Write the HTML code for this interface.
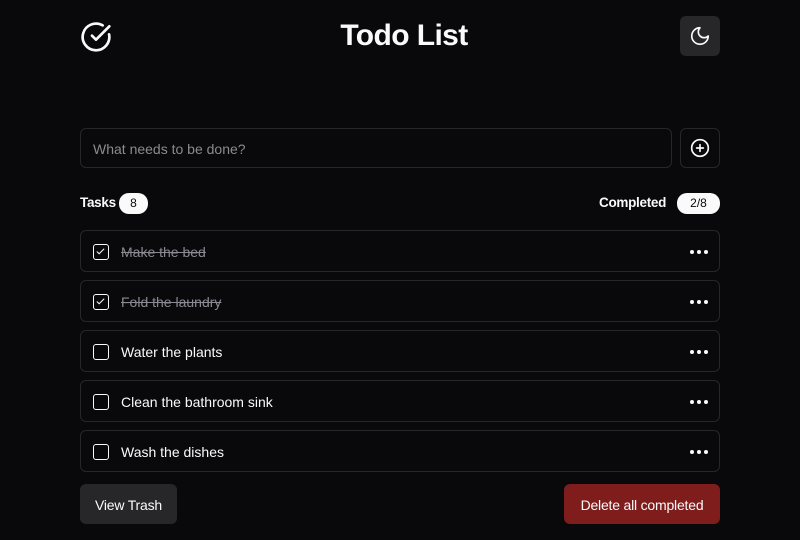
<!DOCTYPE html>
<html><head><style>
*{margin:0;padding:0;box-sizing:border-box}
body{width:800px;height:540px;background:#09090b;color:#fafafa;font-family:"Liberation Sans",sans-serif;position:relative;overflow:hidden}
.a{position:absolute}
.title{left:0;width:808px;top:19px;text-align:center;font-size:30px;font-weight:bold;letter-spacing:-0.6px}
.moon{left:680px;top:16px;width:40px;height:40px;background:#27272a;border-radius:6px;display:flex;align-items:center;justify-content:center}
.inp{left:80px;top:128px;width:592px;height:40px;border:1px solid #27272a;border-radius:6px;color:#8a8a92;font-size:14px;padding:12px 12px}
.plus{left:680px;top:128px;width:40px;height:40px;border:1px solid #27272a;border-radius:6px;display:flex;align-items:center;justify-content:center}
.lbl{font-size:13.5px;font-weight:bold;top:195px;letter-spacing:-0.3px}
.badge{background:#fafafa;color:#09090b;font-size:12px;border-radius:10px;height:21px;top:193px;text-align:center;line-height:21px}
.item{left:80px;width:640px;height:42px;border:1px solid #27272a;border-radius:6px}
.cb{position:absolute;left:12px;top:13px;width:16px;height:16px;border:1.5px solid #fafafa;border-radius:3px}
.txt{position:absolute;left:40px;top:13px;font-size:14px}
.done{color:#8a8a92;text-decoration:line-through}
.dots{position:absolute;right:11px;top:19px;display:flex;gap:3px}
.dots i{width:4px;height:4px;background:#fafafa;border-radius:50%}
.btn{top:484px;height:40px;border-radius:6px;font-size:14px;line-height:42px;text-align:center;letter-spacing:-0.2px}
</style></head><body>
<svg class="a" style="left:80px;top:21px" width="32" height="32" viewBox="0 0 24 24" fill="none" stroke="#fafafa" stroke-width="2" stroke-linecap="round" stroke-linejoin="round"><path d="M21.8 10A10 10 0 1 1 17 3.3"/><path d="m9 11 3 3L22 4"/></svg>
<div class="a title">Todo List</div>
<div class="a moon"><svg width="22" height="22" viewBox="0 0 24 24" fill="none" stroke="#fafafa" stroke-width="1.8" stroke-linecap="round" stroke-linejoin="round"><path d="M12 3a6 6 0 0 0 9 9 9 9 0 1 1-9-9Z"/></svg></div>
<div class="a inp">What needs to be done?</div>
<div class="a plus"><svg width="20" height="20" viewBox="0 0 24 24" fill="none" stroke="#fafafa" stroke-width="2" stroke-linecap="round"><circle cx="12" cy="12" r="10"/><path d="M8 12h8M12 8v8"/></svg></div>
<div class="a lbl" style="left:80px">Tasks</div>
<div class="a badge" style="left:119px;width:29px">8</div>
<div class="a lbl" style="left:599px">Completed</div>
<div class="a badge" style="left:677px;width:43px">2/8</div>

<div class="a item" style="top:230px"><div class="cb"><svg width="11" height="11" viewBox="0 0 24 24" fill="none" stroke="#fafafa" stroke-width="2.2" style="position:absolute;left:1px;top:1px"><path d="M4 12l5 5L20 6"/></svg></div><div class="txt done">Make the bed</div><div class="dots"><i></i><i></i><i></i></div></div>
<div class="a item" style="top:280px"><div class="cb"><svg width="11" height="11" viewBox="0 0 24 24" fill="none" stroke="#fafafa" stroke-width="2.2" style="position:absolute;left:1px;top:1px"><path d="M4 12l5 5L20 6"/></svg></div><div class="txt done">Fold the laundry</div><div class="dots"><i></i><i></i><i></i></div></div>
<div class="a item" style="top:330px"><div class="cb"></div><div class="txt">Water the plants</div><div class="dots"><i></i><i></i><i></i></div></div>
<div class="a item" style="top:380px"><div class="cb"></div><div class="txt">Clean the bathroom sink</div><div class="dots"><i></i><i></i><i></i></div></div>
<div class="a item" style="top:430px"><div class="cb"></div><div class="txt">Wash the dishes</div><div class="dots"><i></i><i></i><i></i></div></div>

<div class="a btn" style="left:80px;width:97px;background:#27272a">View Trash</div>
<div class="a btn" style="left:564px;width:156px;background:#7f1d1d">Delete all completed</div>
</body></html>
